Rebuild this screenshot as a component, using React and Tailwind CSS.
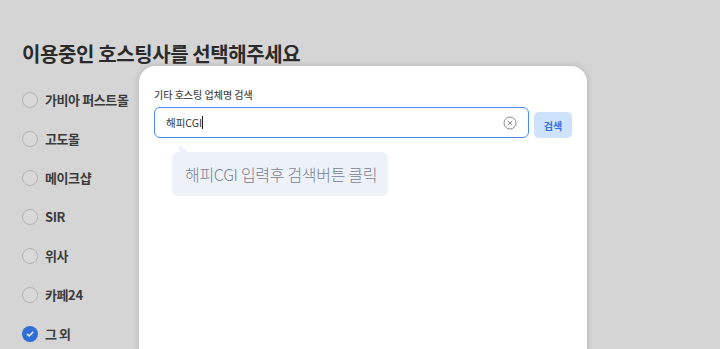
import React from "react";

const hosts = ["가비아 퍼스트몰", "고도몰", "메이크샵", "SIR", "위사", "카페24", "그 외"];

function Radio({ checked }) {
    if (checked) {
        return (
            <span className="w-4 h-4 rounded-full bg-[#2f6fd6] flex items-center justify-center">
                <svg width="10" height="10" viewBox="0 0 10 10">
                    <path d="M2.3 5.2 L4.2 7 L7.8 3.2" fill="none" stroke="#fff" strokeWidth="1.4" strokeLinecap="round" strokeLinejoin="round" />
                </svg>
            </span>
        );
    }
    return <span className="w-4 h-4 rounded-full border border-[#b4b4b4] bg-[#d9d9d9]"></span>;
}

export default function App() {
    return (
        <div
            className="relative w-[720px] h-[349px] overflow-hidden bg-[#d5d5d5]"
            style={{ fontFamily: '"Noto Sans CJK KR", "Noto Sans", sans-serif' }}
        >
            {/* 왼쪽 호스팅사 목록 */}
            <div className="pl-[22px] pt-[40px]">
                <h1 className="text-[20px] leading-[28px] font-bold text-[#2b2b2b] tracking-[-0.4px]">
                    이용중인 호스팅사를 선택해주세요
                </h1>
                <ul className="mt-[24px] flex flex-col gap-[23px]">
                    {hosts.map((h) => (
                        <li key={h} className="flex items-center gap-[7px] h-4">
                            <Radio checked={h === "그 외"} />
                            <span className="text-[13px] font-bold text-[#3c3c3c] tracking-[-0.4px]">{h}</span>
                        </li>
                    ))}
                </ul>
            </div>

            {/* 검색 모달 */}
            <div className="absolute left-[139px] top-[66px] w-[448px] h-[300px] bg-white rounded-2xl shadow-[0_0_6px_rgba(0,0,0,0.18)] pl-[15px] pt-[22px]">
                <p className="text-[10px] leading-[14px] font-medium text-[#4a4a4a]">기타 호스팅 업체명 검색</p>
                <div className="mt-[5px] flex items-end gap-[5px]">
                    <div className="w-[375px] h-[31px] rounded-[6px] border-[1.5px] border-[#4a8af4] flex items-center justify-between pl-[11px] pr-[11px]">
                        <span className="text-[10.5px] text-[#333] flex items-center">
                            해피CGI<span className="w-px h-[13px] bg-[#222]"></span>
                        </span>
                        <svg width="14" height="14" viewBox="0 0 14 14">
                            <circle cx="7" cy="7" r="6" fill="none" stroke="#8a8a8a" strokeWidth="1" />
                            <path d="M4.8 4.8 L9.2 9.2 M9.2 4.8 L4.8 9.2" stroke="#8a8a8a" strokeWidth="1" />
                        </svg>
                    </div>
                    <button className="w-[38px] h-[26px] rounded-[5px] bg-[#cfe2fc] text-[10px] font-bold text-[#2f6fd8]">
                        검색
                    </button>
                </div>

                {/* 안내 말풍선 */}
                <div className="ml-[18px] mt-[7px]">
                    <svg width="10" height="7" viewBox="0 0 10 7" className="ml-[7px] block">
                        <polygon points="0,0 0,7 9,7" fill="#edf1f8" />
                    </svg>
                    <div className="w-[216px] h-[44px] rounded-[6px] bg-[#edf1f8] flex items-center pl-[13px]">
                        <span className="text-[16px] font-light text-[#7a8291] tracking-[-0.3px] whitespace-nowrap">
                            해피CGI 입력후 검색버튼 클릭
                        </span>
                    </div>
                </div>
            </div>
        </div>
    );
}
